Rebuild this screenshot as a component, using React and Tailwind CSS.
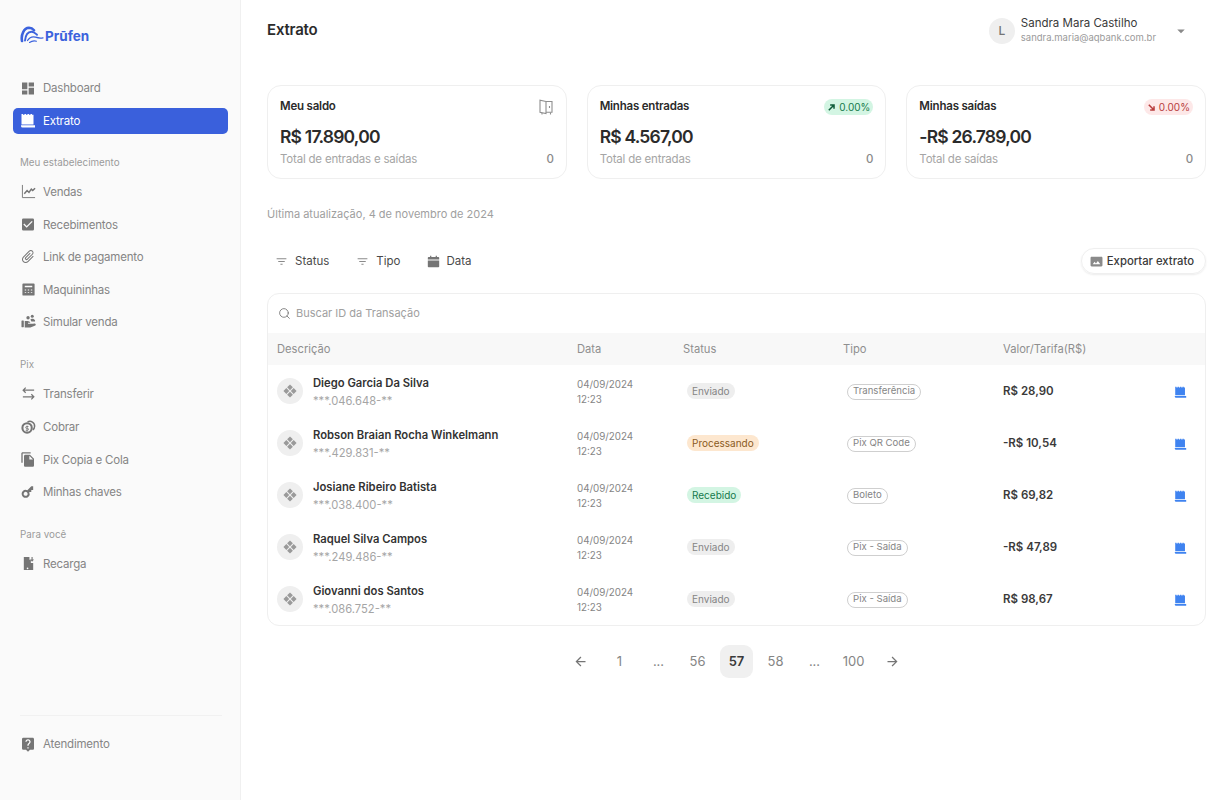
import React from "react";
import {
  MdDashboard,
  MdCheckBox,
  MdAttachFile,
  MdFileCopy,
  MdKey,
  MdLiveHelp,
  MdFilterList,
  MdArrowDropDown,
  MdPhotoSizeSelectActual,
  MdArrowBack,
  MdArrowForward,
} from "react-icons/md";
import { Search } from "lucide-react";

const ExtratoIcon = ({ className }) => (
  <svg viewBox="0 0 16 16" className={className} fill="currentColor">
    <path d="M1.500 1h1.500v.8h1.500V1h1.500v.8h1.500V1h1.500v.8h1.500V1h1.500v.8h1.500V11.500H1.500z" />
    <path d="M1 12.300h14v2.200H2.500A1.500 1.500 0 0 1 1 13z" />
  </svg>
);

const ChartIcon = ({ className }) => (
  <svg viewBox="0 0 16 16" className={className} fill="none" stroke="currentColor">
    <path d="M1.500 1v13.500H15" strokeWidth="1" />
    <path d="M3.500 10.500 6.500 7l2 2 2.500-3.500 1.500 1.500L15 4.500" strokeWidth="1.600" />
  </svg>
);

const CalculatorIcon = ({ className }) => (
  <svg viewBox="0 0 16 16" className={className} fill="currentColor">
    <path
      fillRule="evenodd"
      d="M2.500 1.500h11a1 1 0 0 1 1 1v11a1 1 0 0 1-1 1h-11a1 1 0 0 1-1-1v-11a1 1 0 0 1 1-1zM4 4v1.500h8V4zM4 8v1h1.500V8zM7.200 8v1h1.500V8zM10.500 8v1H12V8zM4 10.800v1h1.500v-1zM7.200 10.800v1h1.500v-1zM10.500 10.800v1H12v-1z"
    />
  </svg>
);

const PeopleIcon = ({ className }) => (
  <svg viewBox="0 0 16 16" className={className} fill="currentColor">
    <rect x="0.500" y="7" width="2.500" height="7" rx="0.500" />
    <path d="M4 7.500h3c1.500 0 2.500.8 3 1.800H7.500v1H13c1 0 2.300-.6 2.700.6.200.8-.3 1.300-1 1.700L10 14.500H4z" />
    <circle cx="7.500" cy="4" r="1.800" />
    <circle cx="12" cy="2.500" r="1.600" />
    <path d="M10 6c.6-.8 1.200-1 2-1 1.300 0 2.500.7 3 2v1h-4c-.2-.8-.5-1.400-1-2z" />
  </svg>
);

const TransferIcon = ({ className }) => (
  <svg viewBox="0 0 16 16" className={className} fill="none" stroke="currentColor" strokeWidth="1.300">
    <path d="M14 4.500H2.500M5 1.800 2.300 4.500 5 7.200" />
    <path d="M2 11.500h11.500M11 8.800l2.700 2.700-2.700 2.700" />
  </svg>
);

const CoinIcon = ({ className }) => (
  <svg viewBox="0 0 16 16" className={className} fill="none" stroke="currentColor">
    <circle cx="6.500" cy="9.500" r="5" strokeWidth="2.200" />
    <path d="M7 3.200A5 5 0 0 1 14.500 8a5 5 0 0 1-1.800 3.600" strokeWidth="1.600" />
    <path d="M8 8H6a1 1 0 0 0 0 2h1a1 1 0 0 1 0 2H5M6.500 7v6" strokeWidth="0.900" />
  </svg>
);

const RecargaIcon = ({ className }) => (
  <svg viewBox="0 0 16 16" className={className} fill="currentColor">
    <path d="M3 1h6v3h1.500v3.500H13V15H3zM7 12.200a.9.900 0 1 0 0 1.800.9.900 0 0 0 0-1.800z" fillRule="evenodd" />
    <path d="M11.200 1h1.200v2.600h1.500l-2.100 2.400-2-2.400h1.400z" />
  </svg>
);

const DoorIcon = ({ className }) => (
  <svg viewBox="0 0 16 16" className={className} fill="none" stroke="currentColor" strokeWidth="1.100">
    <path d="M8 2.500 2 1.200v12l6 1.300zM8 2.500h6v10.700H8" />
    <path d="M11.500 7v2M4 14v1.500M12.500 13.500v2" />
  </svg>
);

const CalendarIcon = ({ className }) => (
  <svg viewBox="0 0 16 16" className={className} fill="currentColor">
    <path d="M1 3.500a1 1 0 0 1 1-1h1.800V1h1.500v1.500h5.400V1h1.500v1.500H14a1 1 0 0 1 1 1V5.500H1z" />
    <path d="M1 6.800h14V14a1 1 0 0 1-1 1H2a1 1 0 0 1-1-1z" />
  </svg>
);

const DiamondIcon = ({ className }) => (
  <svg viewBox="0 0 16 16" className={className} fill="currentColor">
    <path d="M8 .5l3.300 3.300L8 7.100 4.700 3.800zM3.800 4.700 7.100 8l-3.300 3.300L.5 8zM12.200 4.700 15.500 8l-3.300 3.300L8.900 8zM8 8.900l3.300 3.300L8 15.500l-3.300-3.300z" />
  </svg>
);

const ArrowUpIcon = ({ className }) => (
  <svg viewBox="0 0 10 10" className={className} fill="none" stroke="currentColor" strokeWidth="1.700">
    <path d="M2 8 7.500 2.500M3.500 2.200h4.300v4.300" />
  </svg>
);

const ArrowDownIcon = ({ className }) => (
  <svg viewBox="0 0 10 10" className={className} fill="none" stroke="currentColor" strokeWidth="1.700">
    <path d="M2 2l5.500 5.500M7.800 3.500v4.300H3.500" />
  </svg>
);

const LogoIcon = () => (
  <svg viewBox="0 0 24 18" className="w-[24px] h-[18px]" fill="none" stroke="#3b62dd" strokeLinecap="round">
    <path d="M2 15C.8 8.500 4 2 9 1.800c2 0 3.800.9 5 2.400" strokeWidth="2.600" />
    <path d="M5 14.500C5.500 9.500 8 6 11.500 5.800c2.500-.1 3.800 1.500 5.500 3" strokeWidth="1.900" />
    <path d="M7.500 14.500c2-3 5-4.300 8-3.300 2.500.8 4.800 1.100 7.500.6" strokeWidth="1.300" />
    <path d="M9.500 16.500c2.200-1.600 4.500-2 7-1.300" strokeWidth="1.100" />
  </svg>
);

const navGroups = [
  {
    label: "Meu estabelecimento",
    items: [
      { name: "Vendas", icon: ChartIcon, small: true },
      { name: "Recebimentos", icon: MdCheckBox },
      { name: "Link de pagamento", icon: MdAttachFile, tilt: "rotate-45" },
      { name: "Maquininhas", icon: CalculatorIcon, small: true },
      { name: "Simular venda", icon: PeopleIcon, small: true },
    ],
  },
  {
    label: "Pix",
    items: [
      { name: "Transferir", icon: TransferIcon, small: true },
      { name: "Cobrar", icon: CoinIcon, small: true },
      { name: "Pix Copia e Cola", icon: MdFileCopy },
      { name: "Minhas chaves", icon: MdKey, tilt: "-rotate-45" },
    ],
  },
  {
    label: "Para você",
    items: [{ name: "Recarga", icon: RecargaIcon, small: true }],
  },
];

const rows = [
  { name: "Diego Garcia Da Silva", doc: "***.046.648-**", status: "Enviado", tipo: "Transferência", valor: "R$ 28,90" },
  { name: "Robson Braian Rocha Winkelmann", doc: "***.429.831-**", status: "Processando", tipo: "Pix QR Code", valor: "-R$ 10,54" },
  { name: "Josiane Ribeiro Batista", doc: "***.038.400-**", status: "Recebido", tipo: "Boleto", valor: "R$ 69,82" },
  { name: "Raquel Silva Campos", doc: "***.249.486-**", status: "Enviado", tipo: "Pix - Saída", valor: "-R$ 47,89" },
  { name: "Giovanni dos Santos", doc: "***.086.752-**", status: "Enviado", tipo: "Pix - Saída", valor: "R$ 98,67" },
];

const statusStyles = {
  Enviado: "bg-[#eeeeee] text-[#858585]",
  Processando: "bg-[#fde7cf] text-[#8a5a1e]",
  Recebido: "bg-[#d3f5e3] text-[#157a4c]",
};

const NavItem = ({ item }) => {
  const Icon = item.icon;
  return (
    <div className="flex items-center h-[26px] pl-[7px] gap-[7px] text-[11.500px] tracking-[-0.2px] text-[#858585]">
      <span className="w-[16px] h-[16px] flex items-center justify-center text-[#757575]">
        <Icon className={`${item.small ? "w-[15px] h-[15px]" : "w-[17px] h-[17px]"} ${item.tilt || ""}`} />
      </span>
      <span className="mt-[2px]">{item.name}</span>
    </div>
  );
};

const Sidebar = () => (
  <aside className="w-[241px] shrink-0 h-[800px] bg-[#fafafa] border-r border-[#f0f0f0] flex flex-col pl-[13px] pr-[12px]">
    <div className="flex items-start gap-[1px] pl-[7px] pt-[26px] h-[75px]">
      <LogoIcon />
      <span className="text-[13.500px] font-bold text-[#3b62dd]">Prūfen</span>
    </div>
    <div className="flex flex-col gap-[6.600px] -mb-[1px]">
      <NavItem item={{ name: "Dashboard", icon: MdDashboard }} />
      <div className="flex items-center h-[26px] pl-[7px] gap-[7px] text-[11.500px] tracking-[-0.2px] text-white bg-[#3a60dc] rounded-[5px]">
        <ExtratoIcon className="w-[16px] h-[16px]" />
        <span className="mt-[2px]">Extrato</span>
      </div>
    </div>
    {navGroups.map((group) => (
      <div key={group.label} className="mt-[23px] flex flex-col">
        <div className="text-[9.800px] text-[#9a9a9a] pl-[7px] h-[14px] leading-[14px] mb-[9px]">{group.label}</div>
        <div className="flex flex-col gap-[6.600px]">
          {group.items.map((item) => (
            <NavItem key={item.name} item={item} />
          ))}
        </div>
      </div>
    ))}
    <div className="mt-auto mb-[43px]">
      <div className="border-t border-[#f1f1f1] ml-[7px] mr-[6px] mb-[15px]" />
      <NavItem item={{ name: "Atendimento", icon: MdLiveHelp }} />
    </div>
  </aside>
);

const Card = ({ title, value, sub, badge }) => (
  <div className="bg-white border border-[#efefef] rounded-[14px] h-[94px] px-[12px] pt-[13px] flex flex-col">
    <div className="flex items-center justify-between h-[16px]">
      <span className="text-[11.500px] font-semibold text-[#2b2b2b] tracking-[-0.2px]">{title}</span>
      {badge}
    </div>
    <div className="text-[17.500px] font-semibold text-[#2b2b2b] mt-[11px] leading-[22px] tracking-[-0.8px]">{value}</div>
    <div className="flex justify-between text-[11.500px] tracking-[-0.2px] text-[#a5a5a5] mt-[3px]">
      <span>{sub}</span>
      <span className="text-[#8a8a8a] font-medium">0</span>
    </div>
  </div>
);

const App = () => (
  <div className="flex w-[1232px] h-[800px] bg-white overflow-hidden font-['Inter',sans-serif]">
    <Sidebar />
    <main className="flex-1 pl-[26px] pr-[26px]">
      <header className="flex items-start justify-between h-[85px]">
        <h1 className="text-[15px] font-semibold text-[#2b2b2b] mt-[19px] tracking-[-0.2px]">Extrato</h1>
        <div className="flex items-center mt-[16px] mr-[16px]">
          <div className="w-[26px] h-[26px] rounded-full bg-[#efefef] flex items-center justify-center text-[12px] font-medium text-[#757575]">L</div>
          <div className="ml-[6px] leading-none">
            <div className="text-[11.500px] text-[#3a3a3a] leading-[14px]">Sandra Mara Castilho</div>
            <div className="text-[9.500px] text-[#9a9a9a] leading-[14px] mt-[1px]">sandra.maria@aqbank.com.br</div>
          </div>
          <MdArrowDropDown className="w-[18px] h-[18px] ml-[16px] text-[#8a8a8a]" />
        </div>
      </header>

      <section className="grid grid-cols-3 gap-[20px]">
        <Card
          title="Meu saldo"
          value="R$ 17.890,00"
          sub="Total de entradas e saídas"
          badge={<DoorIcon className="w-[16px] h-[16px] text-[#8f8f8f]" />}
        />
        <Card
          title="Minhas entradas"
          value="R$ 4.567,00"
          sub="Total de entradas"
          badge={
            <span className="flex items-center h-[16px] px-[3px] rounded-full bg-[#d3f5e3] text-[10px] text-[#157a4c]">
              <ArrowUpIcon className="w-[9px] h-[9px] mr-[3px] text-[#0f5c3a]" />
              0.00%
            </span>
          }
        />
        <Card
          title="Minhas saídas"
          value="-R$ 26.789,00"
          sub="Total de saídas"
          badge={
            <span className="flex items-center h-[16px] px-[3px] rounded-full bg-[#fde8e8] text-[10px] text-[#b83c3c]">
              <ArrowDownIcon className="w-[9px] h-[9px] mr-[3px]" />
              0.00%
            </span>
          }
        />
      </section>

      <p className="text-[11px] text-[#a0a0a0] mt-[27px] h-[16px] leading-[16px]">Última atualização, 4 de novembro de 2024</p>

      <div className="flex items-center justify-between mt-[26px] h-[26px] text-[11.500px] text-[#4a4a4a]">
        <div className="flex items-center pl-[8px]">
          <MdFilterList className="w-[13px] h-[13px] text-[#8a8a8a]" />
          <span className="ml-[7px] mt-[2px]">Status</span>
          <MdFilterList className="w-[13px] h-[13px] text-[#8a8a8a] ml-[27px]" />
          <span className="ml-[7px] mt-[2px]">Tipo</span>
          <CalendarIcon className="w-[13px] h-[13px] text-[#757575] ml-[27px]" />
          <span className="ml-[6px] mt-[2px]">Data</span>
        </div>
        <button className="flex items-center h-[26px] pl-[8px] pr-[11px] rounded-full border border-[#efefef] shadow-[0_1px_2px_rgba(0,0,0,0.08)] text-[11.300px] font-medium text-[#3a3a3a]">
          <MdPhotoSizeSelectActual className="w-[13px] h-[13px] text-[#8a8a8a] mr-[4px]" />
          Exportar extrato
        </button>
      </div>

      <section className="mt-[19px] border border-[#efefef] rounded-[12px] overflow-hidden">
        <div className="flex items-center h-[39px] pl-[10px] text-[11px] text-[#a0a0a0]">
          <Search className="w-[13px] h-[13px] text-[#757575]" strokeWidth={1.6} />
          <span className="ml-[5px]">Buscar ID da Transação</span>
        </div>
        <div className="grid grid-cols-[300px_106px_160px_160px_1fr] items-center h-[32px] pl-[9px] bg-[#f8f8f8] text-[11.200px] text-[#8f8f8f]">
          <span>Descrição</span>
          <span>Data</span>
          <span>Status</span>
          <span>Tipo</span>
          <span>Valor/Tarifa(R$)</span>
        </div>
        {rows.map((row) => (
          <div key={row.doc} className="grid grid-cols-[300px_106px_160px_160px_1fr] items-center h-[52px] pl-[9px]">
            <div className="flex items-center">
              <div className="w-[26px] h-[26px] rounded-full bg-[#efefef] flex items-center justify-center">
                <DiamondIcon className="w-[14px] h-[14px] text-[#9a9a9a]" />
              </div>
              <div className="ml-[10px] pt-[1px]">
                <div className="text-[11.250px] font-semibold text-[#333333] leading-[16px]">{row.name}</div>
                <div className="text-[11.200px] text-[#a5a5a5] leading-[16px] mt-[2px]">{row.doc}</div>
              </div>
            </div>
            <div className="text-[9.800px] text-[#858585] leading-[15px] pt-[1px]">
              <div>04/09/2024</div>
              <div>12:23</div>
            </div>
            <div className="flex">
              <span className={`flex items-center h-[16px] px-[5px] ml-[4px] rounded-full text-[10px] ${statusStyles[row.status]}`}>{row.status}</span>
            </div>
            <div className="flex pt-[1px]">
              <span className="flex items-center h-[16px] px-[5px] ml-[4px] rounded-full border border-[#cfcfcf] text-[9.600px] text-[#858585]">{row.tipo}</span>
            </div>
            <div className="flex items-center justify-between pr-[18px] pt-[2px]">
              <span className="text-[11.500px] font-semibold text-[#3a3a3a]">{row.valor}</span>
              <ExtratoIcon className="w-[13px] h-[13px] text-[#3f83f0]" />
            </div>
          </div>
        ))}
      </section>

      <nav className="flex items-center justify-center h-[33px] mt-[19px] text-[13px] text-[#858585]">
        <span className="w-[39px] flex justify-center"><MdArrowBack className="w-[15px] h-[15px] text-[#757575]" /></span>
        <span className="w-[39px] text-center">1</span>
        <span className="w-[39px] text-center">...</span>
        <span className="w-[39px] text-center">56</span>
        <span className="w-[33px] h-[33px] mx-[3px] rounded-[9px] bg-[#f0f0f0] flex items-center justify-center font-semibold text-[#3a3a3a]">57</span>
        <span className="w-[39px] text-center">58</span>
        <span className="w-[39px] text-center">...</span>
        <span className="w-[39px] text-center">100</span>
        <span className="w-[39px] flex justify-center"><MdArrowForward className="w-[15px] h-[15px] text-[#757575]" /></span>
      </nav>
    </main>
  </div>
);

export default App;
